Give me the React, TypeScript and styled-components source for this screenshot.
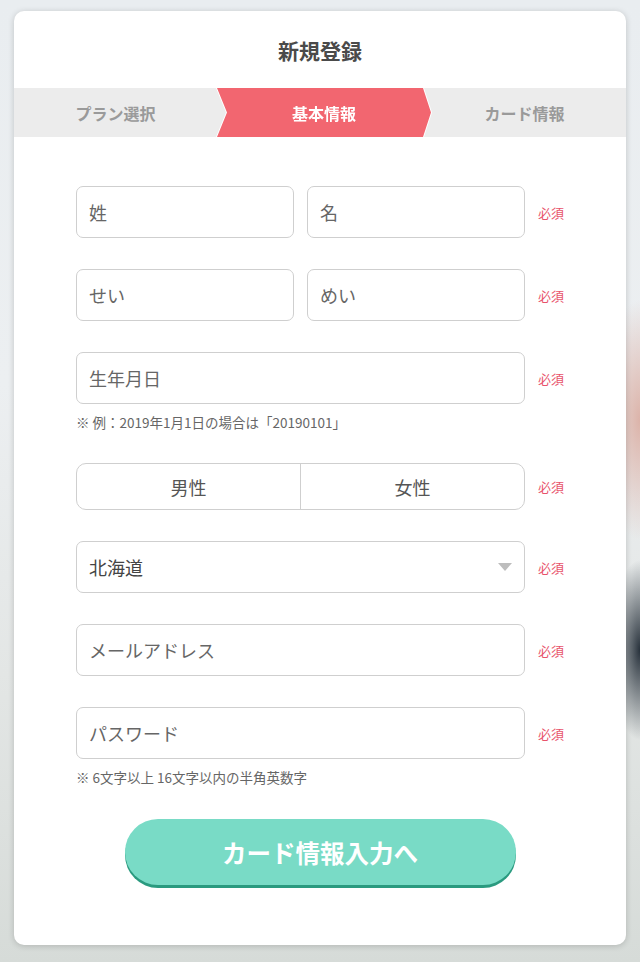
import React from 'react'
import styled, { createGlobalStyle } from 'styled-components'

const GlobalStyle = createGlobalStyle`
  html, body {
    margin: 0;
    padding: 0;
  }
  body {
    font-family: "Noto Sans CJK JP", "Noto Sans", "Liberation Sans", sans-serif;
    background:
      radial-gradient(ellipse 40px 120px at 640px 420px, #dcb3a9 0%, rgba(220,179,169,0) 100%),
      radial-gradient(ellipse 30px 90px at 640px 650px, #27313b 0%, rgba(39,49,59,0) 100%),
      linear-gradient(180deg, #e9edf0 0%, #eceff1 40%, #e3e6e5 70%, #d6dbd8 100%);
    min-height: 962px;
  }
`

type FieldRowProps = {
    required?: boolean
    children: React.ReactNode
}

function FieldRow(props: FieldRowProps) {
    return (
        <Row>
            <Fields>{props.children}</Fields>
            <Required>{props.required ? '必須' : ''}</Required>
        </Row>
    )
}

export default function App() {
    return (
        <>
            <GlobalStyle/>
            <Page>
                <Card>
                    <Title>新規登録</Title>
                    <Steps>
                        <Step>プラン選択</Step>
                        <ActiveWrap>
                            <ActiveStep>基本情報</ActiveStep>
                        </ActiveWrap>
                        <Step>カード情報</Step>
                    </Steps>

                    <Form>
                        <Group>
                            <FieldRow required>
                                <Input>姓</Input>
                                <Input>名</Input>
                            </FieldRow>
                        </Group>
                        <Group>
                            <FieldRow required>
                                <Input>せい</Input>
                                <Input>めい</Input>
                            </FieldRow>
                        </Group>
                        <Group>
                            <FieldRow required>
                                <Input>生年月日</Input>
                            </FieldRow>
                            <Hint>※ 例：2019年1月1日の場合は「20190101」</Hint>
                        </Group>
                        <Group>
                            <FieldRow required>
                                <Toggle>
                                    <ToggleItem>男性</ToggleItem>
                                    <ToggleItem>女性</ToggleItem>
                                </Toggle>
                            </FieldRow>
                        </Group>
                        <Group>
                            <FieldRow required>
                                <Select>
                                    <SelectText>北海道</SelectText>
                                    <Caret width="14" height="8" viewBox="0 0 14 8">
                                        <path d="M0 0 L14 0 L7 8 Z" fill="#bdbdbd"/>
                                    </Caret>
                                </Select>
                            </FieldRow>
                        </Group>
                        <Group>
                            <FieldRow required>
                                <Input>メールアドレス</Input>
                            </FieldRow>
                        </Group>
                        <Group>
                            <FieldRow required>
                                <Input>パスワード</Input>
                            </FieldRow>
                            <Hint>※ 6文字以上 16文字以内の半角英数字</Hint>
                        </Group>
                    </Form>

                    <SubmitButton>カード情報入力へ</SubmitButton>
                </Card>
            </Page>
        </>
    )
}

const Page = styled.div`
  padding: 11px 14px 18px;
`

const Card = styled.div`
  width: 612px;
  background: #fff;
  border-radius: 10px;
  box-shadow: 0 1px 6px rgba(0, 0, 0, 0.18);
  overflow: hidden;
  padding-bottom: 60px;
  display: flex;
  flex-direction: column;
  align-items: center;
`

const Title = styled.h1`
  margin: 0;
  height: 77px;
  width: 100%;
  display: flex;
  align-items: center;
  justify-content: center;
  font-size: 21px;
  font-weight: bold;
  color: #4a4a4a;
`

const Steps = styled.div`
  width: 100%;
  height: 49px;
  background: #ececec;
  display: flex;
`

const Step = styled.div`
  flex: 1;
  display: flex;
  align-items: center;
  justify-content: center;
  font-size: 16px;
  font-weight: bold;
  color: #9a9a9a;
`

const ActiveWrap = styled.div`
  flex: 0 0 214px;
  margin-right: -8px;
  position: relative;
  z-index: 1;
  filter: drop-shadow(1px 0 0 #fff) drop-shadow(-1px 0 0 #fff);
`

const ActiveStep = styled.div`
  height: 100%;
  background: #f26670;
  clip-path: polygon(0 0, calc(100% - 8px) 0, 100% 50%, calc(100% - 8px) 100%, 0 100%, 10px 50%);
  display: flex;
  align-items: center;
  justify-content: center;
  font-size: 16px;
  font-weight: bold;
  color: #fff;
`

const Form = styled.div`
  width: 100%;
  box-sizing: border-box;
  padding: 49px 48px 0 62px;
  display: flex;
  flex-direction: column;
  gap: 31px;
`

const Group = styled.div`
  display: flex;
  flex-direction: column;
`

const Row = styled.div`
  display: flex;
  align-items: center;
  gap: 13px;
`

const Fields = styled.div`
  width: 449px;
  display: flex;
  gap: 13px;
`

const Required = styled.span`
  font-size: 13px;
  color: #e8536b;
  white-space: nowrap;
`

const Input = styled.div`
  flex: 1;
  height: 52px;
  box-sizing: border-box;
  border: 1px solid #cfcfcf;
  border-radius: 7px;
  padding: 0 12px;
  display: flex;
  align-items: center;
  font-size: 18px;
  color: #666;
`

const Toggle = styled.div`
  flex: 1;
  height: 47px;
  box-sizing: border-box;
  border: 1px solid #cfcfcf;
  border-radius: 10px;
  display: flex;
  overflow: hidden;
`

const ToggleItem = styled.div`
  flex: 1;
  display: flex;
  align-items: center;
  justify-content: center;
  font-size: 18px;
  color: #555;

  & + & {
    border-left: 1px solid #cfcfcf;
  }
`

const Select = styled(Input)`
  justify-content: space-between;
  padding-right: 12px;
  color: #444;
`

const SelectText = styled.span``

const Caret = styled.svg`
  display: block;
`

const Hint = styled.div`
  margin-top: 8px;
  font-size: 13.5px;
  line-height: 20px;
  color: #666;
`

const SubmitButton = styled.button`
  margin-top: 32px;
  width: 391px;
  height: 66px;
  border: none;
  border-radius: 33px;
  background: #79dbc6;
  box-shadow: 0 3px 0 #2a9a7f;
  color: #fff;
  font-family: inherit;
  font-size: 24.5px;
  font-weight: bold;
  cursor: pointer;
`
